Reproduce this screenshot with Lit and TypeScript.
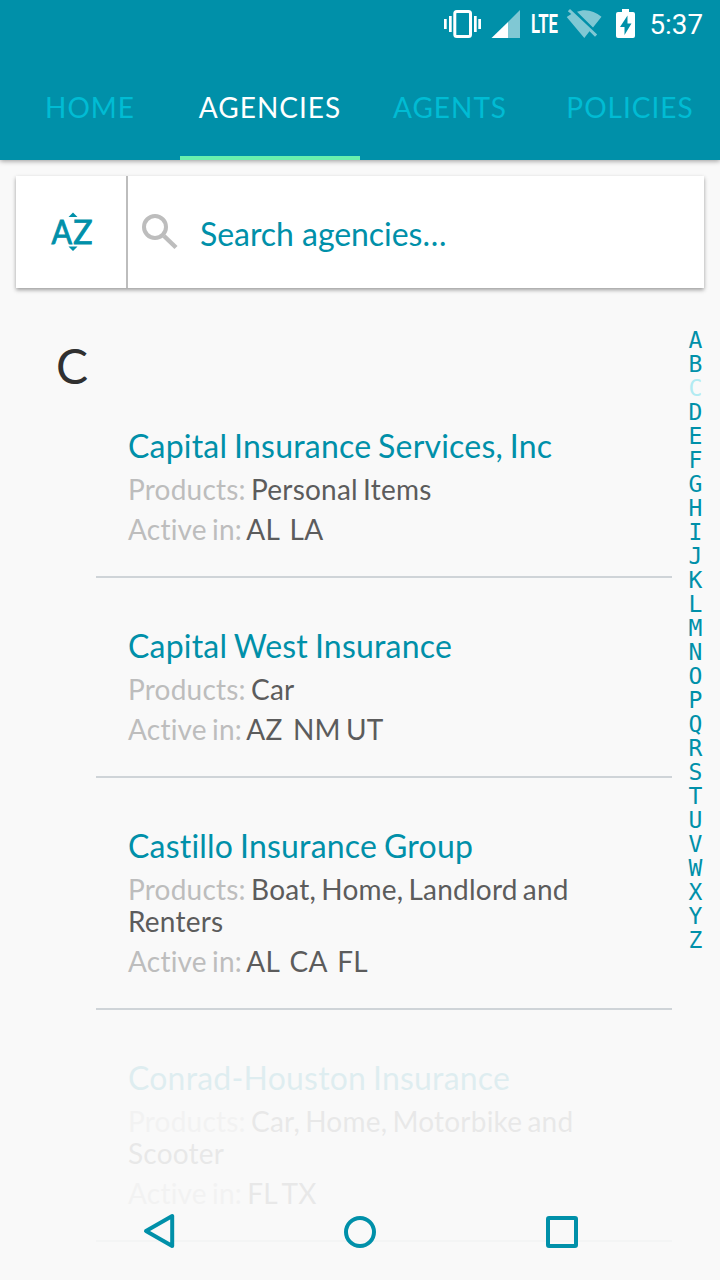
import { LitElement, html, css } from "lit";
import { customElement, property } from "lit/decorators.js";

interface Agency {
  name: string;
  products: string;
  states: string;
  faded?: boolean;
}

const AGENCIES: Agency[] = [
  { name: "Capital Insurance Services, Inc", products: "Personal Items", states: "AL\u00a0 LA" },
  { name: "Capital West Insurance", products: "Car", states: "AZ\u00a0 NM UT" },
  { name: "Castillo Insurance Group", products: "Boat, Home, Landlord and Renters", states: "AL\u00a0 CA\u00a0 FL" },
  { name: "Conrad-Houston Insurance", products: "Car, Home, Motorbike and Scooter", states: "FL TX", faded: true },
];

@customElement("status-bar")
export class StatusBar extends LitElement {
  static styles = css`
    :host { display: flex; height: 48px; position: relative; color: #fff; }
    .icons { display: block; width: 720px; height: 48px; }
    .lte { font: 700 25px "Roboto", sans-serif; }
    .time { font: 400 28px "Roboto", sans-serif; }
  `;
  render() {
    return html`<svg class="icons" viewBox="0 0 720 48" fill="#fff">
      <rect x="454.800" y="11.500" width="15.700" height="25" rx="2" fill="none" stroke="#fff" stroke-width="3"></rect>
      <path d="M444 19h2.700v10H444zM449 16h2.700v16H449zM474 16h2.700v16H474zM478.300 19h2.700v10h-2.700z"></path>
      <path d="M520 10v28h-12V22z" opacity=".5"></path>
      <path d="M508 22v16h-16.500z"></path>
      <text class="lte" x="531" y="33" textLength="27" lengthAdjust="spacingAndGlyphs">LTE</text>
      <path opacity=".5" d="M570 9L567.800 11.300L571.300 14L566.700 17L584.300 38L589.500 31.300L595 36.700L597.200 34.500zM577 11.800C585 8.500 594 10.500 601.500 16.700L593 27.500z"></path>
      <path fill-rule="evenodd" d="M622 9h7v3h4q2 0 2 2v22q0 2-2 2h-15q-2 0-2-2V14q0-2 2-2h4zM627.500 15.500l-7.500 11.500h4.500v8l7-11.500h-4z"></path>
      <text class="time" x="649.500" y="34" textLength="53.500" lengthAdjust="spacingAndGlyphs">5:37</text>
    </svg>`;
  }
}

@customElement("tab-bar")
export class TabBar extends LitElement {
  static styles = css`
    :host { display: flex; height: 112px; }
    .tab {
      flex: 0 0 180px; box-sizing: border-box; height: 112px; padding-top: 41px;
      text-align: center; white-space: nowrap; color: #00bcd4;
      font-size: 28px; line-height: 36px; letter-spacing: 1px;
    }
    .active { color: #fff; border-bottom: 4px solid #69f0ae; }
  `;
  render() {
    return ["HOME", "AGENCIES", "AGENTS", "POLICIES"].map(
      (t) => html`<div class="tab ${t === "AGENCIES" ? "active" : ""}">${t}</div>`
    );
  }
}

@customElement("search-card")
export class SearchCard extends LitElement {
  static styles = css`
    :host {
      display: flex; height: 112px; margin: 16px 16px 0; background: #fff;
      box-shadow: 0 2px 4px rgba(0, 0, 0, .38);
    }
    .sort { width: 110px; border-right: 2px solid #bdbdbd; }
    .glyph { display: block; }
    .az { font: 400 32px "Lato", sans-serif; stroke: #0090a9; stroke-width: .9px; }
    .query { display: flex; flex: 1; }
    .hint { padding: 38px 0 0 16px; font-size: 32px; line-height: 40px; color: #0090a9; letter-spacing: -.05px; }
  `;
  render() {
    return html`
      <div class="sort">
        <svg class="glyph" width="110" height="112" fill="#0090a9">
          <text class="az" x="35.500" y="67.500" textLength="20.500" lengthAdjust="spacingAndGlyphs">A</text>
          <text class="az" x="57.200" y="67.500">Z</text>
          <path d="M52.500 41l4.500-4.500 4.500 4.500zM52.500 70.500h9L57 75z"></path>
        </svg>
      </div>
      <div class="query">
        <svg class="glyph" width="56" height="112" fill="none" stroke="#bdbdbd">
          <circle cx="27" cy="51" r="11" stroke-width="4"></circle>
          <path d="M36 60l12 11.500" stroke-width="4.500"></path>
        </svg>
        <div class="hint">Search agencies…</div>
      </div>`;
  }
}

@customElement("agency-row")
export class AgencyRow extends LitElement {
  @property({ attribute: false }) agency!: Agency;
  static styles = css`
    :host { display: block; border-bottom: 2px solid #cfd4d8; padding: 48px 32px 31px; font-variant-ligatures: none; }
    :host([faded]) { opacity: .1; }
    .name { font-size: 32px; line-height: 40px; color: #0090a9; white-space: nowrap; letter-spacing: .2px; word-spacing: -1.5px; }
    .line { font-size: 28px; line-height: 32px; color: #5c5c5c; margin-top: 8px; letter-spacing: .22px; word-spacing: -2.2px; }
    .name + .line { margin-top: 7px; }
    .label { color: #bdbdbd; }
  `;
  render() {
    const a = this.agency;
    return html`
      <div class="name">${a.name}</div>
      <div class="line"><span class="label">Products:</span> ${a.products}</div>
      <div class="line"><span class="label">Active in:</span> ${a.states}</div>`;
  }
}

@customElement("letter-index")
export class LetterIndex extends LitElement {
  static styles = css`
    :host { display: block; padding: 40px 1px 0 0; }
    .letter {
      height: 24px; line-height: 24px; text-align: center; color: #0090a9;
      font-family: "DejaVu Sans Mono", monospace; font-size: 23px;
    }
    .current { color: #b2ebf2; }
  `;
  render() {
    return [..."ABCDEFGHIJKLMNOPQRSTUVWXYZ"].map(
      (l) => html`<div class="letter ${l === "C" ? "current" : ""}">${l}</div>`
    );
  }
}

@customElement("app-root")
export class AppRoot extends LitElement {
  static styles = css`
    :host {
      display: block; position: relative; width: 720px; height: 1280px; overflow: hidden;
      background: #f9f9f9; font-family: "Lato", sans-serif;
    }
    .header { position: relative; height: 160px; background: #0090a9; box-shadow: 0 1px 5px rgba(0, 0, 0, .4); }
    .body { display: grid; grid-template-columns: 96px 576px 48px; }
    .section { padding: 49px 0 0 56px; font-size: 48px; line-height: 58px; color: #303030; }
    .list { padding-top: 90px; }
    .nav { position: absolute; left: 0; bottom: 0; width: 720px; height: 96px; }
  `;
  render() {
    return html`
      <div class="header"><status-bar></status-bar><tab-bar></tab-bar></div>
      <search-card></search-card>
      <div class="body">
        <div class="section">C</div>
        <div class="list">
          ${AGENCIES.map((a) => html`<agency-row .agency=${a} ?faded=${!!a.faded}></agency-row>`)}
        </div>
        <letter-index></letter-index>
      </div>
      <svg class="nav" viewBox="0 0 720 96" fill="none" stroke="#0090a9" stroke-width="4">
        <path d="M172.200 32v30L146 47z" stroke-linejoin="round"></path>
        <circle cx="360" cy="48" r="14"></circle>
        <rect x="548" y="34" width="28" height="28" rx="1"></rect>
      </svg>`;
  }
}
